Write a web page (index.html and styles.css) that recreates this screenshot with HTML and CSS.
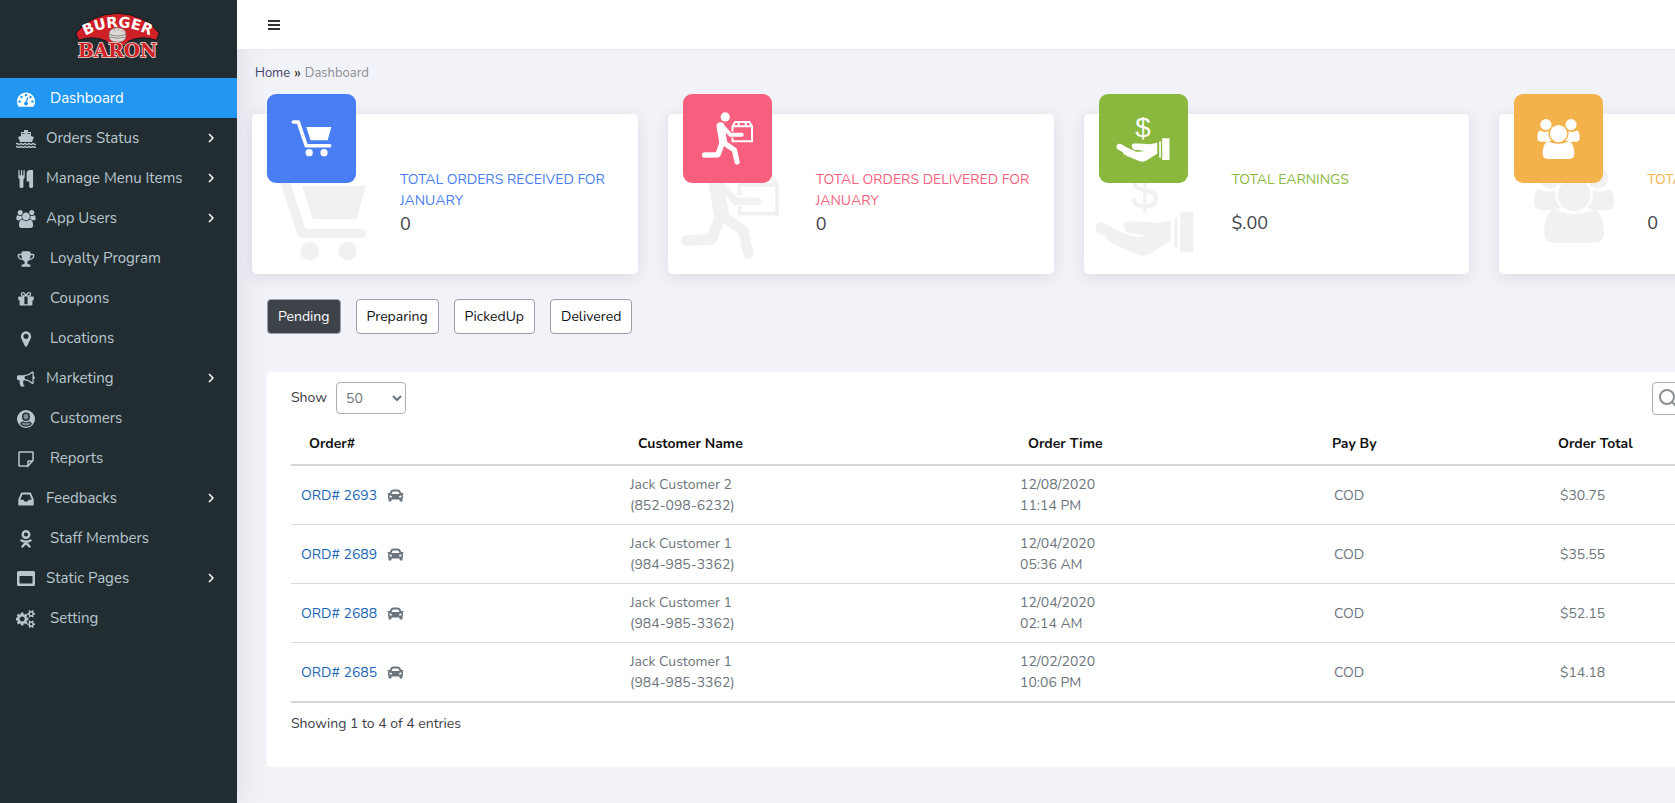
FILE: index.html
```html
<!DOCTYPE html>
<html lang="en">
<head>
  <meta charset="UTF-8" />
  <title>Burger Baron - Dashboard</title>
  <meta name="viewport" content="width=device-width, initial-scale=1.0" />
  <link rel="stylesheet" href="styles.css">
</head>
<body>
  <!-- icon sprite -->
  <svg class="sprite" aria-hidden="true">
    <symbol id="i-dashboard" viewBox="0 0 1792 1792"><path d="M384 1152q0-53-37.500-90.500t-90.500-37.500-90.500 37.500-37.500 90.500 37.500 90.500 90.500 37.500 90.500-37.500 37.500-90.500zm192-448q0-53-37.500-90.500t-90.500-37.500-90.500 37.500-37.500 90.500 37.500 90.500 90.500 37.500 90.500-37.500 37.500-90.500zm428 481l101-382q6-26-7.500-48.500t-38.500-29.500-48 6.500-30 39.500l-101 382q-60 5-107 43.500t-63 98.500q-20 77 20 146t117 89 146-20 89-117q16-60-6-117t-72-91zm660-33q0-53-37.500-90.500t-90.500-37.500-90.500 37.500-37.500 90.500 37.500 90.500 90.500 37.500 90.500-37.500 37.500-90.500zm-640-640q0-53-37.500-90.500t-90.500-37.500-90.500 37.500-37.500 90.500 37.500 90.500 90.500 37.500 90.500-37.500 37.500-90.500zm448 192q0-53-37.500-90.500t-90.500-37.500-90.500 37.500-37.500 90.500 37.500 90.500 90.500 37.500 90.500-37.500 37.500-90.500zm320 448q0 261-141 483-19 29-54 29h-1402q-35 0-54-29-141-221-141-483 0-182 71-348t191-286 286-191 348-71 348 71 286 191 191 286 71 348z"/></symbol>
    <symbol id="i-ship" viewBox="0 0 20 18"><path d="M8 0h4v2h3v4l3 1-2 5H4L2 7l3-1V2h3zM6 3v1l4-1 4 1V3z" fill-rule="evenodd"/><path d="M0 14q1-1 2 0t2 0 2 0 2 0 2 0 2 0 2 0 2 0 2 0 2 0M0 17q1-1 2 0t2 0 2 0 2 0 2 0 2 0 2 0 2 0 2 0 2 0" fill="none" stroke="currentColor" stroke-width="1.500"/></symbol>
    <symbol id="i-cutlery" viewBox="0 0 1664 1792"><path d="M704 64v640q0 61-35.500 111t-92.500 70v779q0 52-38 90t-90 38h-128q-52 0-90-38t-38-90v-779q-57-20-92.500-70t-35.500-111v-640q0-26 19-45t45-19 45 19 19 45v416q0 26 19 45t45 19 45-19 19-45v-416q0-26 19-45t45-19 45 19 19 45v416q0 26 19 45t45 19 45-19 19-45v-416q0-26 19-45t45-19 45 19 19 45zm832 0v1600q0 52-38 90t-90 38h-128q-52 0-90-38t-38-90v-512h-224q-13 0-22.500-9.500t-9.500-22.500v-800q0-132 94-226t226-94h256q26 0 45 19t19 45z"/></symbol>
    <symbol id="i-users" viewBox="64 0 1920 1792"><path d="M657 896q-162 5-265 128h-134q-82 0-138-40.500t-56-118.500q0-353 124-353 6 0 43.500 21t97.500 42.500 119 21.500q67 0 133-23-5 37-5 66 0 139 81 256zm1071 637q0 120-73 189.500t-194 69.500h-874q-121 0-194-69.500t-73-189.500q0-53 3.500-103.500t14-109 26.500-108.500 43-97.500 62-81 85.500-53.500 111.500-20q10 0 43 21.500t73 48 107 48 135 21.500 135-21.500 107-48 73-48 43-21.500q61 0 111.500 20t85.500 53.500 62 81 43 97.500 26.500 108.500 14 109 3.500 103.500zm-1024-1277q0 106-75 181t-181 75-181-75-75-181 75-181 181-75 181 75 75 181zm704 384q0 159-112.500 271.500t-271.500 112.500-271.500-112.500-112.500-271.500 112.500-271.500 271.500-112.500 271.500 112.500 112.500 271.500zm576 225q0 78-56 118.500t-138 40.500h-134q-103-123-265-128 81-117 81-256 0-29-5-66 66 23 133 23 59 0 119-21.500t97.500-42.500 43.500-21q124 0 124 353zm-128-609q0 106-75 181t-181 75-181-75-75-181 75-181 181-75 181 75 75 181z"/></symbol>
    <symbol id="i-trophy" viewBox="0 0 1792 1792"><path d="M522 883q-74-162-74-371h-256v96q0 78 94.500 162t235.500 113zm1078-275v-96h-256q0 209-74 371 141-29 235.500-113t94.500-162zm128-128v128q0 71-41.500 143t-112 130-173 97.500-215.500 44.500q-42 54-95 95-38 34-52.500 72.500t-14.500 89.500q0 54 30.500 91t97.500 37q75 0 133.500 45.500t58.500 114.500v64q0 14-9 23t-23 9h-832q-14 0-23-9t-9-23v-64q0-69 58.500-114.500t133.500-45.500q67 0 97.500-37t30.500-91q0-51-14.500-89.500t-52.500-72.500q-53-41-95-95-113-5-215.500-44.500t-173-97.500-112-130-41.500-143v-128q0-40 28-68t68-28h288v-96q0-66 47-113t113-47h576q66 0 113 47t47 113v96h288q40 0 68 28t28 68z"/></symbol>
    <symbol id="i-gift" viewBox="0 0 1792 1792"><path d="M1056 1356v-716h-320v716q0 25 18 38.500t46 13.500h192q28 0 46-13.500t18-38.500zm-456-844h195l-126-161q-26-31-69-31-40 0-68 28t-28 68 28 68 68 28zm688-96q0-40-28-68t-68-28q-43 0-69 31l-125 161h194q40 0 68-28t28-68zm376 256v320q0 14-9 23t-23 9h-96v416q0 40-28 68t-68 28h-1088q-40 0-68-28t-28-68v-416h-96q-14 0-23-9t-9-23v-320q0-14 9-23t23-9h440q-93 0-158.500-65.500t-65.500-158.500 65.500-158.500 158.500-65.500q107 0 168 77l128 165 128-165q61-77 168-77 93 0 158.500 65.500t65.500 158.500-65.500 158.500-158.500 65.500h440q14 0 23 9t9 23z"/></symbol>
    <symbol id="i-marker" viewBox="0 0 1792 1792"><path d="M1152 640q0-106-75-181t-181-75-181 75-75 181 75 181 181 75 181-75 75-181zm256 0q0 109-33 179l-364 774q-16 33-47.500 52t-67.500 19-67.500-19-46.500-52l-365-774q-33-70-33-179 0-212 150-362t362-150 362 150 150 362z"/></symbol>
    <symbol id="i-bullhorn" viewBox="0 0 1792 1792"><path d="M1664 640q53 0 90.500 37.500t37.500 90.500-37.500 90.500-90.500 37.500v384q0 52-38 90t-90 38q-417-347-812-380-58 19-91 66t-31 100.500 40 92.500q-20 33-23 65.500t6 58 33.500 55 48 50 61.500 50.500q-29 58-111.500 83t-168.500 11.500-132-55.500q-7-23-29.500-87.500t-32-94.500-23-89-15-101 3.500-98.500 22-110.500h-122q-66 0-113-47t-47-113v-192q0-66 47-113t113-47h480q435 0 896-384 52 0 90 38t38 90v384zm-128 604v-954q-394 302-768 343v270q377 42 768 341z"/></symbol>
    <symbol id="i-user-circle" viewBox="0 0 18 18"><path fill-rule="evenodd" d="M9 0a9 9 0 1 1 0 18A9 9 0 0 1 9 0zm0 2.500a4 4.200 0 1 0 0 8.400 4 4.200 0 0 0 0-8.400zM3 14q2.500 2.800 6 2.800t6-2.800q-.8-2.200-2.600-2.700-3.400 2-6.800 0Q3.800 11.800 3 14z"/><path d="M9 3.800a2.500 2.800 0 1 1 0 5.600 2.500 2.800 0 0 1 0-5.600zM4.600 14q4.400 3.200 8.800 0-.6-1.200-1.400-1.400-3 1.400-6 0-.8.200-1.400 1.400z" opacity=".6"/></symbol>
    <symbol id="i-note" viewBox="0 0 18 18"><path d="M10.500 16H2.500Q2 16 2 15.500V2.500Q2 2 2.500 2h13q.5 0 .5.500v8L11 16v-4.500q0-.5.500-.5H16" fill="none" stroke="currentColor" stroke-width="1.500"/></symbol>
    <symbol id="i-inbox" viewBox="0 0 1792 1792"><path d="M1151 960h316q-1-3-2.500-8.500t-2.500-7.500l-212-496h-708l-212 496q-1 3-2.500 8.500t-2.500 7.500h316l95 192h320zm513 30v482q0 26-19 45t-45 19h-1408q-26 0-45-19t-19-45v-482q0-62 25-123l238-552q10-25 36.500-42t52.500-17h832q26 0 52.500 17t36.500 42l238 552q25 61 25 123z"/></symbol>
    <symbol id="i-staff" viewBox="0 0 18 18"><g fill="none" stroke="currentColor" stroke-linecap="round"><circle cx="9" cy="4.500" r="3.300" stroke-width="2.400"/><path d="M4.500 10.500Q9 13 13.500 10.500M9 12.500l-3.500 4M9 12.500l3.500 4" stroke-width="2.400"/></g></symbol>
    <symbol id="i-window" viewBox="0 0 18 18"><path fill-rule="evenodd" d="M1.500 1h15Q18 1 18 2.500v12q0 1.500-1.500 1.500h-15Q0 16 0 14.500v-12Q0 1 1.500 1zM2.500 6v7.500h13V6z"/></symbol>
    <symbol id="i-cogs" viewBox="0 0 1920 1792"><path d="M832 896q0-106-75-181t-181-75-181 75-75 181 75 181 181 75 181-75 75-181zm768 512q0-52-38-90t-90-38-90 38-38 90q0 53 37.500 90.500t90.500 37.500 90.500-37.500 37.500-90.500zm0-1024q0-52-38-90t-90-38-90 38-38 90q0 53 37.500 90.500t90.500 37.500 90.500-37.500 37.500-90.500zm-384 421v185q0 10-7 19.500t-16 10.500l-155 24q-11 35-32 76 34 48 90 115 7 11 7 20 0 12-7 19-23 30-82.500 89.500t-78.500 59.500q-11 0-21-7l-115-90q-37 19-77 31-11 108-23 155-7 24-30 24h-186q-11 0-20-7.500t-10-17.500l-23-153q-34-10-75-31l-118 89q-7 7-20 7-11 0-21-8-144-133-144-160 0-9 7-19 10-14 41-53t47-61q-23-44-35-82l-152-24q-10-1-17-9.500t-7-19.500v-185q0-10 7-19.500t16-10.500l155-24q11-35 32-76-34-48-90-115-7-11-7-20 0-12 7-20 22-30 82-89t79-59q11 0 21 7l115 90q34-18 77-32 11-108 23-154 7-24 30-24h186q11 0 20 7.500t10 17.500l23 153q34 10 75 31l118-89q8-7 20-7 11 0 21 8 144 133 144 160 0 8-7 19-12 16-42 54t-45 60q23 48 34 82l152 23q10 2 17 10.500t7 19.500zm640 533v140q0 16-149 31-12 27-30 52 51 113 51 138 0 4-4 7-122 71-124 71-8 0-46-47t-52-68q-20 2-30 2t-30-2q-14 21-52 68t-46 47q-2 0-124-71-4-3-4-7 0-25 51-138-18-25-30-52-149-15-149-31v-140q0-16 149-31 13-29 30-52-51-113-51-138 0-4 4-7 4-2 35-20t59-34 30-16q8 0 46 46.500t52 67.500q20-2 30-2t30 2q51-71 92-112l6-2q4 0 124 70 4 3 4 7 0 25-51 138 17 23 30 52 149 15 149 31zm0-1024v140q0 16-149 31-12 27-30 52 51 113 51 138 0 4-4 7-122 71-124 71-8 0-46-47t-52-68q-20 2-30 2t-30-2q-14 21-52 68t-46 47q-2 0-124-71-4-3-4-7 0-25 51-138-18-25-30-52-149-15-149-31v-140q0-16 149-31 13-29 30-52-51-113-51-138 0-4 4-7 4-2 35-20t59-34 30-16q8 0 46 46.500t52 67.500q20-2 30-2t30 2q51-71 92-112l6-2q4 0 124 70 4 3 4 7 0 25-51 138 17 23 30 52 149 15 149 31z"/></symbol>
    <symbol id="i-chevron" viewBox="0 0 6 10"><path d="M1 1l4 4-4 4" fill="none" stroke="currentColor" stroke-width="1.500"/></symbol>
    <symbol id="i-car" viewBox="0 48 512 416"><path d="M499.990 176h-59.870l-16.640-41.600C406.380 91.630 365.570 64 319.500 64h-127c-46.060 0-86.880 27.630-103.990 70.400L71.870 176H12.010C4.200 176-1.530 183.340.37 190.910l6 24C7.700 220.250 12.500 224 18.010 224h20.070C24.650 235.730 16 252.780 16 272v48c0 16.120 6.160 30.670 16 41.930V416c0 17.670 14.330 32 32 32h32c17.670 0 32-14.330 32-32v-32h256v32c0 17.670 14.330 32 32 32h32c17.670 0 32-14.330 32-32v-54.070c9.840-11.250 16-25.800 16-41.930v-48c0-19.220-8.650-36.270-22.070-48H494c5.510 0 10.310-3.750 11.640-9.090l6-24c1.890-7.570-3.840-14.910-11.650-14.910zm-352.060-17.830c7.290-18.220 24.940-30.170 44.570-30.170h127c19.630 0 37.280 11.950 44.570 30.170L384 208H128l19.930-49.830zM96 319.800c-19.200 0-32-12.760-32-31.900S76.800 256 96 256s48 28.710 48 47.850-28.800 15.950-48 15.950zm320 0c-19.200 0-48 3.190-48-15.950S396.800 256 416 256s32 12.760 32 31.900-12.800 31.900-32 31.900z"/></symbol>

    <symbol id="i-cart" viewBox="0 0 122 112"><path d="M6 6h15l24 72h71" fill="none" stroke="currentColor" stroke-width="11" stroke-linecap="round" stroke-linejoin="round"/><path d="M45 21h76l-11 40H58z"/><circle cx="54" cy="99" r="11"/><circle cx="99" cy="99" r="11"/></symbol>
    <symbol id="i-runner" viewBox="0 0 154 158"><circle cx="70" cy="14" r="14"/><g fill="none" stroke="currentColor" stroke-linecap="round" stroke-linejoin="round"><path d="M56 42l8 48" stroke-width="24"/><path d="M60 40l26 28h34" stroke-width="12"/><path d="M66 92l32 22 8 36" stroke-width="16"/><path d="M62 90l-14 38-40 1" stroke-width="17"/></g><path d="M92 58V42l8-13h43l8 13v45H92V76M92 42h59M112 29l-2 11M131 29l2 11" fill="none" stroke="currentColor" stroke-width="6"/></symbol>
    <symbol id="i-hand" viewBox="0 0 162 142"><text class="coin" x="81" y="66" text-anchor="middle">$</text><path d="M9 87Q0 88 1 99q1 5 10 8l8 5q2 6 12 11l40 17q9 3 18-1l35-22V84l-22 4q-22-3-48-2-12 1-4 15 1 5 15 5l20 3q-16 3-26 1L28 96q-12-9-19-9z"/><path d="M130 79h5v50h-5zM139 70h22v66h-22z"/></symbol>
    <symbol id="i-group" viewBox="0 0 128 121"><circle cx="26" cy="17" r="17"/><circle cx="102" cy="17" r="17"/><circle cx="64" cy="44" r="26"/><path d="M32 67q32 16 64 0 15 7 16 36 0 18-16 18H32q-16 0-16-18 1-29 16-36zM8 35q12 7 26 2-2 18 9 28-13 5-33 4Q0 67 0 56q0-18 8-21zM120 35q-12 7-26 2 2 18-9 28 13 5 33 4 10-2 10-13 0-18-8-21z"/></symbol>
  </svg>

  <div class="wrapper">
    <aside class="sidebar">
      <a href="#" class="logo" aria-label="Burger Baron">
        <svg viewBox="-4 -4 260 150">
          <path id="arc" d="M10 80Q126 10 242 80" fill="none"/>
          <path class="logo-arch" d="M1 62Q50 4 126 3q76 1 125 59l-8 22q-44-16-83 2l-14 14h-40L92 86Q53 68 9 84z"/>
          <text class="logo-top"><textPath href="#arc" startOffset="50%" text-anchor="middle">BURGER</textPath></text>
          <path class="bun" d="M101 64q0-16 25-18 25 2 25 18v10q-2 15-25 15t-25-15z"/>
          <path class="bun-line" d="M101 65q25 12 50 0M104 74q22 8 44 0M115 54h3M127 52h3M138 56h3"/>
          <text class="logo-bottom" x="126" y="134" text-anchor="middle">BARON</text>
        </svg>
      </a>
      <nav class="menu">
        <a href="#" class="active"><svg><use href="#i-dashboard"/></svg><span>Dashboard</span></a>
        <a href="#" class="parent"><svg><use href="#i-ship"/></svg><span>Orders Status</span><svg class="arrow"><use href="#i-chevron"/></svg></a>
        <a href="#" class="parent"><svg><use href="#i-cutlery"/></svg><span>Manage Menu Items</span><svg class="arrow"><use href="#i-chevron"/></svg></a>
        <a href="#" class="parent"><svg><use href="#i-users"/></svg><span>App Users</span><svg class="arrow"><use href="#i-chevron"/></svg></a>
        <a href="#"><svg><use href="#i-trophy"/></svg><span>Loyalty Program</span></a>
        <a href="#"><svg><use href="#i-gift"/></svg><span>Coupons</span></a>
        <a href="#"><svg><use href="#i-marker"/></svg><span>Locations</span></a>
        <a href="#" class="parent"><svg><use href="#i-bullhorn"/></svg><span>Marketing</span><svg class="arrow"><use href="#i-chevron"/></svg></a>
        <a href="#"><svg><use href="#i-user-circle"/></svg><span>Customers</span></a>
        <a href="#"><svg><use href="#i-note"/></svg><span>Reports</span></a>
        <a href="#" class="parent"><svg><use href="#i-inbox"/></svg><span>Feedbacks</span><svg class="arrow"><use href="#i-chevron"/></svg></a>
        <a href="#"><svg><use href="#i-staff"/></svg><span>Staff Members</span></a>
        <a href="#" class="parent"><svg><use href="#i-window"/></svg><span>Static Pages</span><svg class="arrow"><use href="#i-chevron"/></svg></a>
        <a href="#"><svg><use href="#i-cogs"/></svg><span>Setting</span></a>
      </nav>
    </aside>

    <div class="main">
      <header class="topbar">
        <button type="button" class="toggle" aria-label="Toggle menu">
          <svg viewBox="0 0 12 10"><path d="M0 0h12v2H0zM0 4h12v2H0zM0 8h12v2H0z"/></svg>
        </button>
      </header>

      <main class="content">
        <div class="breadcrumb"><a href="#">Home</a> <b>»</b> <span>Dashboard</span></div>

        <section class="cards">
          <div class="card blue">
            <svg class="shade cart"><use href="#i-cart"/></svg>
            <div class="tile"><svg class="cart"><use href="#i-cart"/></svg></div>
            <div class="info"><p>TOTAL ORDERS RECEIVED FOR JANUARY</p><strong>0</strong></div>
          </div>
          <div class="card pink">
            <svg class="shade runner"><use href="#i-runner"/></svg>
            <div class="tile"><svg class="runner"><use href="#i-runner"/></svg></div>
            <div class="info"><p>TOTAL ORDERS DELIVERED FOR JANUARY</p><strong>0</strong></div>
          </div>
          <div class="card green">
            <svg class="shade hand"><use href="#i-hand"/></svg>
            <div class="tile"><svg class="hand"><use href="#i-hand"/></svg></div>
            <div class="info"><p>TOTAL EARNINGS</p><strong>$.00</strong></div>
          </div>
          <div class="card orange">
            <svg class="shade group"><use href="#i-group"/></svg>
            <div class="tile"><svg class="group"><use href="#i-group"/></svg></div>
            <div class="info"><p>TOTAL USERS</p><strong>0</strong></div>
          </div>
        </section>

        <div class="tabs">
          <button type="button" class="active">Pending</button>
          <button type="button">Preparing</button>
          <button type="button">PickedUp</button>
          <button type="button">Delivered</button>
        </div>

        <section class="panel">
          <div class="tools">
            <label for="length">Show</label>
            <select id="length">
              <option>10</option>
              <option>25</option>
              <option selected>50</option>
              <option>100</option>
            </select>
            <div class="search">
              <svg viewBox="0 0 20 20"><circle cx="8" cy="8" r="7"/><path d="M13 13l6 6"/></svg>
              <input type="search" aria-label="Search orders">
            </div>
          </div>
          <table>
            <colgroup><col class="c-order"><col class="c-name"><col class="c-time"><col class="c-pay"><col></colgroup>
            <thead>
              <tr><th>Order#</th><th>Customer Name</th><th>Order Time</th><th>Pay By</th><th>Order Total</th></tr>
            </thead>
            <tbody>
              <tr><td><a href="#">ORD# 2693</a><svg class="car"><use href="#i-car"/></svg></td><td>Jack Customer 2<br>(852-098-6232)</td><td>12/08/2020<br>11:14 PM</td><td class="wide">COD</td><td class="wide">$30.75</td></tr>
              <tr><td><a href="#">ORD# 2689</a><svg class="car"><use href="#i-car"/></svg></td><td>Jack Customer 1<br>(984-985-3362)</td><td>12/04/2020<br>05:36 AM</td><td class="wide">COD</td><td class="wide">$35.55</td></tr>
              <tr><td><a href="#">ORD# 2688</a><svg class="car"><use href="#i-car"/></svg></td><td>Jack Customer 1<br>(984-985-3362)</td><td>12/04/2020<br>02:14 AM</td><td class="wide">COD</td><td class="wide">$52.15</td></tr>
              <tr><td><a href="#">ORD# 2685</a><svg class="car"><use href="#i-car"/></svg></td><td>Jack Customer 1<br>(984-985-3362)</td><td>12/02/2020<br>10:06 PM</td><td class="wide">COD</td><td class="wide">$14.18</td></tr>
            </tbody>
          </table>
          <p class="entries">Showing 1 to 4 of 4 entries</p>
        </section>
      </main>
    </div>
  </div>
</body>
</html>
```
FILE: styles.css
```css
* {
  box-sizing: border-box;
}

body {
  margin: 0;
  font-family: Nunito, Lato, sans-serif;
  font-size: 14px;
  line-height: 21px;
  color: #3e4148;
  background: #f2f3f8;
  overflow-x: hidden;
}

a {
  text-decoration: none;
}

p {
  margin: 0;
}

svg {
  fill: currentColor;
  flex: none;
}

.sprite {
  position: absolute;
  width: 0;
  height: 0;
}

.wrapper {
  display: flex;
  min-height: 100vh;
}

/* sidebar */
.sidebar {
  flex: 0 0 237px;
  background: #222d32;
  box-shadow: 0 0 28px rgba(82, 63, 105, 0.15);
}

.logo {
  display: flex;
  justify-content: center;
  height: 78px;
  padding: 11px 3px 0 0;
}

.logo svg {
  width: 87px;
  height: 50px;
  overflow: visible;
}

.logo-arch {
  fill: #cf2027;
  stroke: #10171a;
  stroke-width: 3;
}

.logo-top {
  font: bold 44px "DejaVu Sans", sans-serif;
  fill: #fff;
}

.logo-bottom {
  font: bold 56px "DejaVu Serif", serif;
  fill: #cf2027;
  stroke: #f0d9d2;
  stroke-width: 5;
  paint-order: stroke;
}

.bun {
  fill: #dcd9d4;
  stroke: #7e7672;
  stroke-width: 2;
}

.bun-line {
  fill: none;
  stroke: #8d8682;
  stroke-width: 3;
}

.menu a {
  display: flex;
  align-items: center;
  height: 40px;
  padding: 0 23px 0 16px;
  font-size: 15px;
  color: #b8c7ce;
}

.menu svg {
  width: 20px;
  height: 18px;
  margin-top: 2px;
}

.menu span {
  margin-left: 14px;
}

.menu .parent span {
  margin-left: 10px;
}

.menu .arrow {
  width: 6px;
  height: 10px;
  margin: 0 0 0 auto;
  color: #fff;
}

.menu a.active {
  background: #2196f3;
  color: #fff;
}

/* top bar */
.main {
  flex: 1 1 0;
  min-width: 1663px;
}

.topbar {
  display: flex;
  align-items: center;
  height: 50px;
  padding: 0 30px;
  background: #fff;
  border-bottom: 1px solid #e9eaf0;
}

.toggle {
  display: flex;
  padding: 1px;
  border: 0;
  background: none;
  color: #333;
}

.toggle svg {
  width: 12px;
  height: 10px;
}

.content {
  padding: 12px 15px 36px;
}

.breadcrumb {
  display: flex;
  gap: 4px;
  padding: 1px 3px 0;
  font-size: 13px;
  color: #8c8c92;
}

.breadcrumb a {
  color: #3f4568;
}

.breadcrumb b {
  font-size: 15px;
  font-weight: 400;
  line-height: 20px;
  color: #222;
}

/* summary cards */
.cards {
  display: grid;
  grid-template-columns: repeat(4, 1fr);
  gap: 30px;
  margin-top: 30px;
}

.card {
  position: relative;
  height: 160px;
  padding: 55px 15px 0 148px;
  background: #fff;
  border-radius: 5px;
  box-shadow: 0 3px 15px rgba(60, 60, 90, 0.12);
}

.tile {
  position: absolute;
  top: -20px;
  left: 15px;
  display: flex;
  align-items: center;
  justify-content: center;
  width: 89px;
  height: 89px;
  border-radius: 9px;
  color: #fff;
}

.info {
  display: flex;
  flex-direction: column;
  justify-content: space-between;
  min-height: 67px;
}

.info strong {
  font-size: 18px;
  font-weight: 400;
  line-height: 26px;
  color: #3e4148;
}

.blue .tile { background: #487df3; }
.pink .tile { background: #f85f7e; }
.green .tile { background: #8ab83e; }
.orange .tile { background: #f4b24d; }

.blue { color: #487df3; }
.pink { color: #f85f7e; }
.green { color: #8ab83e; }
.orange { color: #f4b24d; }

.tile .cart { width: 41px; height: 37px; }
.tile .runner { width: 51px; height: 53px; }
.tile .hand { width: 54px; height: 47px; }
.tile .group { width: 43px; height: 40px; }

/* pale copy of the icon behind the tile */
.shade {
  position: absolute;
  color: #f1f1f1;
}

.shade.cart { top: 54px; left: 12px; width: 103px; height: 94px; }
.shade.runner { top: 44px; left: 13px; width: 98px; height: 101px; }
.shade.hand { top: 55px; left: 11px; width: 99px; height: 87px; }
.shade.group { top: 53px; left: 35px; width: 80px; height: 76px; }

.coin {
  font: 84px "Liberation Sans", sans-serif;
}

/* order state buttons */
.tabs {
  display: flex;
  gap: 15px;
  margin: 25px 15px 0;
}

.tabs button {
  height: 35px;
  padding: 0 10px;
  font: inherit;
  color: #111;
  background: #fff;
  border: 1px solid #9a9fa8;
  border-radius: 4px;
}

.tabs .active {
  color: #fff;
  background: #3e4249;
}

/* orders */
.panel {
  margin: 38px 15px 0;
  padding: 10px 24px 33px;
  background: #fff;
  border-radius: 4px;
}

.tools {
  display: flex;
  align-items: flex-start;
}

.tools label {
  line-height: 32px;
}

select {
  width: 70px;
  height: 32px;
  margin-left: 9px;
  padding-left: 5px;
  font: inherit;
  color: #6c757d;
  background: #fff;
  border: 1px solid #a9b0b8;
  border-radius: 4px;
}

.search {
  display: flex;
  align-items: center;
  width: 194px;
  height: 33px;
  margin-left: auto;
  padding: 0 6px;
  border: 1px solid #a9b0b8;
  border-radius: 4px;
}

.search svg {
  width: 20px;
  height: 20px;
  fill: none;
  stroke: #8b8f94;
  stroke-width: 2;
}

.search input {
  flex: 1;
  min-width: 0;
  border: 0;
  font: inherit;
}

table {
  width: 100%;
  table-layout: fixed;
  border-collapse: collapse;
  border-bottom: 2px solid #d8d4d6;
}

.c-order { width: 329px; }
.c-name { width: 390px; }
.c-time { width: 304px; }
.c-pay { width: 226px; }

th {
  padding: 18px 18px 10px;
  text-align: left;
  font-weight: 700;
  color: #111;
  border-bottom: 2px solid #d8d4d6;
}

td {
  padding: 8px 10px;
  color: #6c757d;
  border-top: 1px solid #dcdcdc;
}

td.wide {
  padding-left: 20px;
}

td a {
  color: #1a66b5;
}

.car {
  width: 17px;
  height: 13px;
  margin-left: 10px;
  vertical-align: -2px;
}

.entries {
  margin-top: 10px;
}
```
